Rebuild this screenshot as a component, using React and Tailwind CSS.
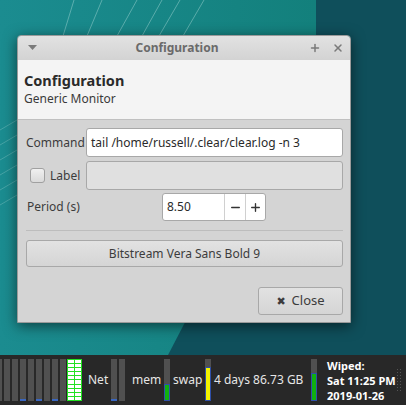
import { Plus, X, Minus } from "lucide-react";

const font = { fontFamily: "'Noto Sans', 'DejaVu Sans', sans-serif" };

// desktop wallpaper, drawn as a picture
const Wallpaper = () => (
	<svg className="absolute inset-0" width="406" height="355" viewBox="0 0 406 355">
		<defs>
			<linearGradient id="teal" x1="0" y1="0" x2="1" y2="0">
				<stop offset="0" stopColor="#1b8c90" />
				<stop offset="1" stopColor="#13807c" />
			</linearGradient>
		</defs>
		<rect width="406" height="355" fill="#0f4f5b" />
		<polygon points="0,0 316,0 316,70 168,355 0,355" fill="url(#teal)" />
		{[
			[74, 63],
			[102, 87],
			[137, 117],
			[162, 142],
			[180, 159],
			[204, 183],
		].map(([a, b], i) => (
			<line key={i} x1={a} y1="0" x2={b} y2="36" stroke="#b9e3e0" strokeOpacity="0.6" strokeWidth="0.7" />
		))}
		{[120, 135, 150, 165, 180, 195].map((y, i) => (
			<line key={i} x1="0" y1={y + 10} x2="17" y2={y} stroke="#b9e3e0" strokeOpacity="0.35" strokeWidth="0.8" />
		))}
	</svg>
);

const Bar = ({ fill, level = 0, tick }) => (
	<div className="relative w-[6px] h-[42px] bg-[#505050] shrink-0">
		{level > 0 && (
			<div
				className="absolute bottom-0 left-0 right-0 border border-[#2f4fa8]"
				style={{ height: `${level}%`, background: fill }}
			/>
		)}
		{tick && <div className="absolute bottom-0 left-0 right-0 h-[2px] bg-[#3a67c0]" />}
	</div>
);

const GreenGrid = () => (
	<div className="grid grid-cols-2 w-[15px] h-[42px] border border-[#22e022] bg-[#22e022] gap-[1px]">
		{Array.from({ length: 20 }).map((_, i) => (
			<div key={i} className="bg-white" />
		))}
	</div>
);

const Taskbar = () => (
	<div className="relative h-[50px] bg-[#282828] flex items-center text-[#e6e6e6] text-[12px]" style={font}>
		<div className="flex gap-[2px] items-center h-full">
			<div className="w-[2px] h-[42px] bg-[#505050]" />
			<Bar />
			<Bar />
			<Bar tick />
			<Bar />
			<Bar tick />
			<Bar />
			<Bar tick />
			<Bar />
		</div>
		<div className="ml-[1px]">
			<GreenGrid />
		</div>
		<span className="ml-[6px] w-[23px]">Net</span>
		<div className="flex gap-[2px]">
			<Bar tick />
			<Bar />
		</div>
		<span className="ml-[7px] w-[32px]">mem</span>
		<Bar fill="#10b010" level={40} />
		<span className="ml-[3px] w-[32px]">swap</span>
		<Bar fill="#f2f200" level={82} />
		<span className="ml-[3px] w-[97px] whitespace-nowrap">4 days 86.73 GB</span>
		<Bar fill="#10b010" level={66} />
		<div className="ml-[10px] flex flex-col text-[11px] font-bold leading-[15px] text-white whitespace-nowrap">
			<span>Wiped:</span>
			<span>Sat 11:25 PM</span>
			<span>2019-01-26</span>
		</div>
		<div className="ml-auto mr-[5px] grid grid-cols-2 gap-[2px]">
			{Array.from({ length: 16 }).map((_, i) => (
				<div key={i} className="w-[1px] h-[1px] bg-[#555]" />
			))}
		</div>
	</div>
);

const Dialog = () => (
	<div
		className="absolute left-[17px] top-[35px] w-[334px] h-[288px] flex flex-col rounded-t-[4px] overflow-hidden shadow-[0_3px_14px_rgba(0,0,0,0.55)] border border-[#9a9a9a]"
		style={font}
	>
		{/* title bar */}
		<div className="h-[24px] flex items-center pl-[10px] pr-[6px] bg-gradient-to-b from-[#e2e2e2] to-[#d3d3d3] text-[#6a6a6a]">
			<svg width="9" height="6" viewBox="0 0 9 6">
				<polygon points="0,0 9,0 4.5,5" fill="#7a7a7a" />
			</svg>
			<span className="flex-1 text-center text-[12px] font-bold pl-[8px]">Configuration</span>
			<Plus size={12} strokeWidth={3} className="text-[#7a7a7a] mr-[11px]" />
			<X size={12} strokeWidth={3} className="text-[#7a7a7a]" />
		</div>

		{/* header */}
		<div className="h-[60px] bg-[#f4f4f4] border-b border-[#c0c0c0] pl-[6px] pt-[11px] text-[#2a2a2a]">
			<div className="text-[14.5px] font-bold leading-[19px]">Configuration</div>
			<div className="text-[12px] leading-[18px] text-[#3a3a3a]">Generic Monitor</div>
		</div>

		{/* body */}
		<div className="flex-1 bg-[#d4d4d4] pl-[8px] pr-[7px] pt-[8px] text-[12px] text-[#3c3c3c] flex flex-col">
			<div className="flex items-center h-[29px]">
				<span className="w-[60px] whitespace-nowrap">Command</span>
				<div className="flex-1 h-full bg-white border border-[#a8a8a8] rounded-[3px] flex items-center px-[4px] text-[#2a2a2a]">
					tail /home/russell/.clear/clear.log -n 3
				</div>
			</div>
			<div className="flex items-center h-[29px] mt-[4px]">
				<div className="w-[60px] flex items-center pl-[4px]">
					<div className="w-[15px] h-[15px] rounded-[3px] border border-[#a0a0a0] bg-gradient-to-b from-[#f0f0f0] to-[#dadada]" />
					<span className="ml-[5px]">Label</span>
				</div>
				<div className="flex-1 h-full bg-[#e0e0e0] border border-[#a8a8a8] rounded-[3px]" />
			</div>
			<div className="flex items-center h-[28px] mt-[3px]">
				<span className="w-[136px] pl-[1px]">Period (s)</span>
				<div className="w-[104px] h-full flex bg-white border border-[#a8a8a8] rounded-[3px]">
					<div className="w-[61px] flex items-center px-[4px] text-[#2a2a2a]">8.50</div>
					<div className="w-[21px] border-l border-[#d0d0d0] flex items-center justify-center">
						<Minus size={13} strokeWidth={2.5} className="text-[#333]" />
					</div>
					<div className="flex-1 border-l border-[#d0d0d0] flex items-center justify-center">
						<Plus size={13} strokeWidth={2.5} className="text-[#333]" />
					</div>
				</div>
			</div>
			<div className="mt-[9px] h-[1px] bg-[#bdbdbd]" />
			<div className="mt-[9px] h-[27px] rounded-[3px] border border-[#a8a8a8] bg-gradient-to-b from-[#e2e2e2] to-[#d5d5d5] flex items-center justify-center text-[#3c3c3c]">
				Bitstream Vera Sans Bold 9
			</div>
			<div className="mt-[20px] flex justify-end">
				<div className="w-[85px] h-[28px] rounded-[3px] border border-[#a8a8a8] bg-gradient-to-b from-[#e2e2e2] to-[#d5d5d5] flex items-center justify-center text-[13px] text-[#3c3c3c]">
					<span className="text-[11px] mr-[6px]">✖</span>
					Close
				</div>
			</div>
		</div>
	</div>
);

export default function App() {
	return (
		<div className="relative w-[406px] h-[405px] overflow-hidden flex flex-col">
			<Wallpaper />
			<div className="flex-1" />
			<Dialog />
			<Taskbar />
		</div>
	);
}
